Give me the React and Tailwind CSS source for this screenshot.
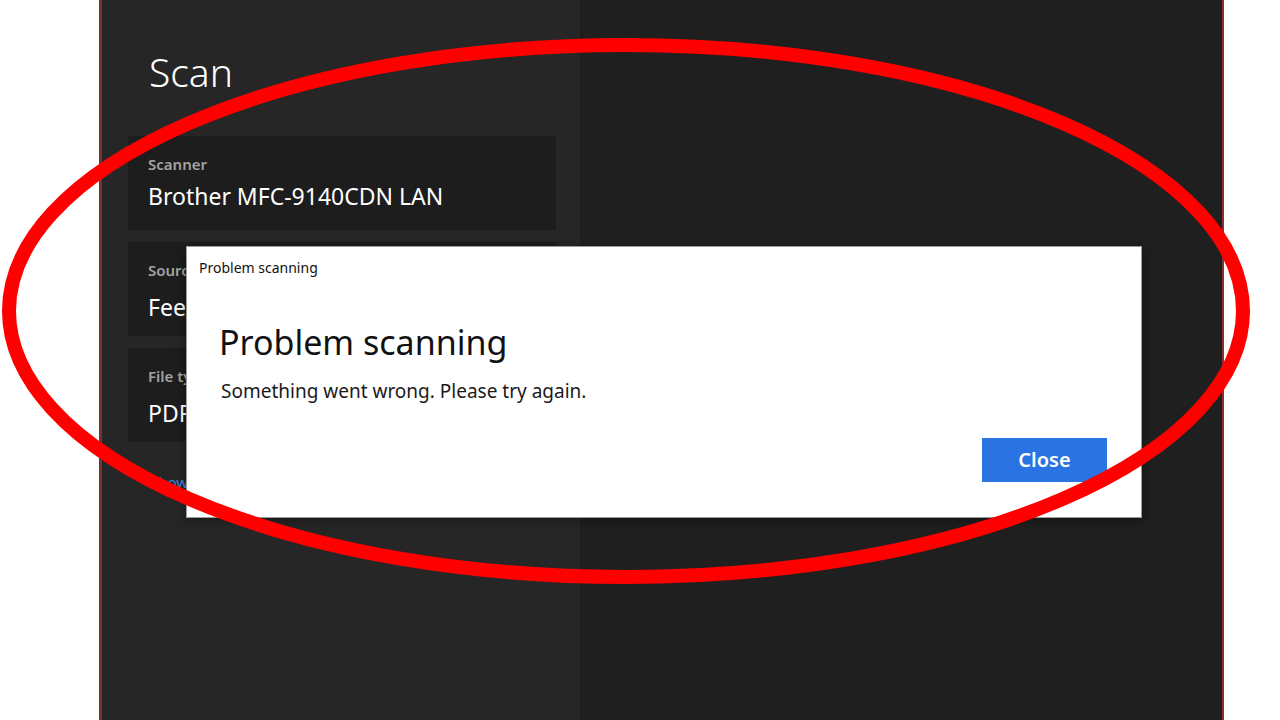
import React from 'react';

const font = { fontFamily: '"Noto Sans", "Open Sans", sans-serif' };

const SettingCard = ({ label, value, wide }) => (
  <div className="h-[94px] w-[428px] bg-[#1d1d1d] pl-[20px] pt-[18px] flex flex-col">
    <span className="text-[15px] leading-[20px] font-semibold text-[#a3a3a3]">{label}</span>
    <span className={`${wide ? 'mt-[12px]' : 'mt-[7px]'} text-[23px] leading-[30px] text-white`}>{value}</span>
  </div>
);

export default function App() {
  return (
    <div className="relative w-[1280px] h-[720px] bg-white flex overflow-hidden" style={font}>
      {/* white margin left of the captured window */}
      <div className="w-[99px] shrink-0 bg-white" />

      {/* scan app window */}
      <div className="flex w-[1125px] h-full border-l-[3px] border-r-[2px] border-l-[#7c2f2f] border-r-[#8a3030]">
        <div className="w-[478px] h-full bg-[#262626] pl-[26px] pt-[48px] flex flex-col">
          <h1 className="pl-[21px] text-[39px] leading-[48px] font-light text-white">Scan</h1>
          <div className="mt-[40px] flex flex-col gap-[12px]">
            <SettingCard label="Scanner" value="Brother MFC-9140CDN LAN" />
            <SettingCard label="Source" value="Feeder" wide />
            <SettingCard label="File type" value="PDF" wide />
          </div>
          <a className="mt-[30px] pl-[22px] text-[15px] leading-[20px] text-[#3c8be0]">Show more</a>
        </div>
        <div className="flex-1 h-full bg-[#1f1f1f]" />
      </div>

      <div className="w-[56px] shrink-0 bg-white" />

      {/* error dialog */}
      <div className="absolute left-[186px] top-[246px] w-[956px] h-[272px] bg-white border border-[#9c9c9c] shadow-[0_3px_10px_rgba(0,0,0,0.35)] flex flex-col">
        <div className="pl-[12px] pt-[11px] text-[14px] leading-[20px] text-[#111]">Problem scanning</div>
        <div className="pl-[32px] pt-[42px] text-[34px] leading-[44px] text-[#111]">Problem scanning</div>
        <div className="pl-[34px] pt-[14px] text-[19px] leading-[26px] text-[#1a1a1a]">Something went wrong. Please try again.</div>
        <div className="flex justify-end pr-[34px] mt-[34px]">
          <button className="w-[125px] h-[44px] bg-[#2a73e3] text-white text-[20px] font-semibold leading-[44px]">Close</button>
        </div>
      </div>

      {/* red annotation ring */}
      <svg className="absolute inset-0 pointer-events-none" width="1280" height="720" viewBox="0 0 1280 720">
        <ellipse cx="626" cy="311" rx="617" ry="266" fill="none" stroke="#ff0000" strokeWidth="14" />
      </svg>
    </div>
  );
}
